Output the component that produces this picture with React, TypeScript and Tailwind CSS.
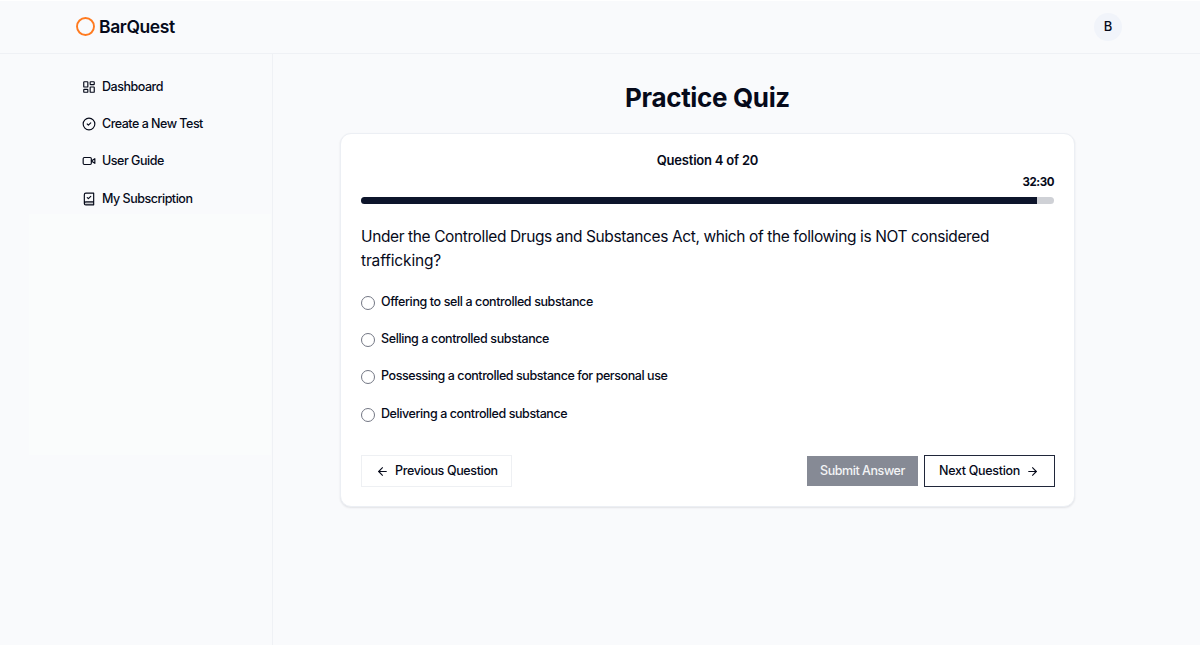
import { ArrowLeft, ArrowRight, CircleCheck, LayoutDashboard } from "lucide-react";

function VideoIcon() {
  return (
    <svg viewBox="0 0 24 24" className="size-[14px]" fill="none" stroke="currentColor" strokeWidth="2" strokeLinecap="round" strokeLinejoin="round">
      <path d="m22 8-6 4 6 4V8Z" />
      <rect width="14" height="12" x="2" y="6" rx="2" />
    </svg>
  );
}

function BookCheckIcon() {
  return (
    <svg viewBox="0 0 24 24" className="size-[14px]" fill="none" stroke="currentColor" strokeWidth="2" strokeLinecap="round" strokeLinejoin="round">
      <path d="M4 17h16v5H4z" fill="currentColor" fillOpacity="0.2" stroke="none" />
      <path d="M4 19.5v-15A2.5 2.5 0 0 1 6.5 2H20v20H6.5a2.5 2.5 0 0 1 0-5H20" />
      <path d="m9 9.5 2 2 4-4" />
    </svg>
  );
}

const navItems = [
  { label: "Dashboard", tracking: "tracking-[-0.47px]", icon: <LayoutDashboard className="size-[14px]" /> },
  { label: "Create a New Test", tracking: "tracking-[-0.5px]", icon: <CircleCheck className="size-[14px]" /> },
  { label: "User Guide", tracking: "tracking-[-0.48px]", icon: <VideoIcon /> },
  { label: "My Subscription", tracking: "tracking-[-0.48px]", icon: <BookCheckIcon /> },
];

const options = [
  { label: "Offering to sell a controlled substance", tracking: "tracking-[-0.39px]" },
  { label: "Selling a controlled substance", tracking: "tracking-[-0.38px]" },
  { label: "Possessing a controlled substance for personal use", tracking: "tracking-[-0.43px]" },
  { label: "Delivering a controlled substance", tracking: "tracking-[-0.41px]" },
];

function Header() {
  return (
    <header className="flex h-[53px] shrink-0 items-center justify-between border-b border-[#eff1f5] pr-[78px] pl-[76px]">
      <div className="flex items-center gap-1">
        <svg viewBox="0 0 19 19" className="mb-px size-[19px]" fill="none">
          <circle cx="9.5" cy="9.5" r="8.5" stroke="#ff7a1f" strokeWidth="1.9" />
        </svg>
        <span className="text-[17.5px] leading-6 font-semibold tracking-[-0.38px]">BarQuest</span>
      </div>
      <div className="flex size-7 items-center justify-center rounded-full bg-[#f1f4fa] text-[13px] font-medium">B</div>
    </header>
  );
}

function Sidebar() {
  return (
    <nav className="flex w-[273px] shrink-0 flex-col border-r border-[#eff1f5] pt-[19px]">
      <div className="flex flex-col gap-[9.4px] pl-[82px]">
        {navItems.map((item) => (
          <a key={item.label} className="flex h-7 items-center gap-[6px] text-[12.5px] font-medium">
            <span className="mb-[0.6px]">{item.icon}</span>
            <span className={item.tracking}>{item.label}</span>
          </a>
        ))}
      </div>
      <div className="mt-px ml-[29px] h-[241px] w-[242px] bg-[#fafcfc]" />
    </nav>
  );
}

function QuizCard() {
  return (
    <section className="flex h-[374px] w-[735px] flex-col rounded-[11px] border border-[#eceff4] bg-white px-5 shadow-[0_1px_2px_rgba(15,23,42,0.1)]">
      <h2 className="mt-4 text-center text-[13px] leading-5 font-semibold tracking-[-0.21px]">Question 4 of 20</h2>
      <div className="mt-[3px] text-right text-[11.5px] leading-[18px] font-bold tracking-[-0.45px]">32:30</div>
      <div className="mt-[6px] h-[7px] shrink-0 overflow-hidden rounded-full bg-[#cfd1d6]">
        <div className="h-full w-[97.5%] bg-[#0d152b]" />
      </div>
      <p className="mt-[21px] text-[15.5px] leading-6 font-normal tracking-[-0.39px]">
        Under the Controlled Drugs and Substances Act, which of the following is NOT considered <span className="tracking-[-0.15px]">trafficking?</span>
      </p>
      <div className="mt-[19px] flex flex-col gap-[17.4px]">
        {options.map((option) => (
          <label key={option.label} className="flex h-5 items-center gap-[6px] text-[12.5px] font-medium">
            <span className="mt-px size-[14px] rounded-full border border-[#737784]" />
            <span className={option.tracking}>{option.label}</span>
          </label>
        ))}
      </div>
      <div className="mt-[31px] -mr-px flex items-center justify-between text-[12.5px] font-medium">
        <button className="flex h-8 w-[151px] items-center gap-[6px] border border-[#eef0f3] pl-[14px]">
          <ArrowLeft className="size-[13px]" />
          <span className="tracking-[-0.36px]">Previous Question</span>
        </button>
        <div className="flex items-center gap-[6px]">
          <button className="h-[30px] w-[111px] bg-[#868a95] tracking-[-0.45px] text-[#f3f4f6]">Submit Answer</button>
          <button className="flex h-8 w-[131px] items-center gap-[6px] border border-[#20273a] pl-[14px]">
            <span className="tracking-[-0.3px]">Next Question</span>
            <ArrowRight className="size-[13px]" />
          </button>
        </div>
      </div>
    </section>
  );
}

export default function App() {
  return (
    <div className="flex h-screen flex-col overflow-hidden border-t border-white bg-[#f9fafc] font-['Inter',sans-serif] text-[#060a1a]">
      <Header />
      <div className="flex flex-1">
        <Sidebar />
        <main className="flex flex-1 flex-col items-center pr-[58px]">
          <h1 className="mt-[26px] mb-[17px] text-[26px] leading-9 font-bold tracking-[-0.35px]">Practice Quiz</h1>
          <QuizCard />
        </main>
      </div>
    </div>
  );
}
